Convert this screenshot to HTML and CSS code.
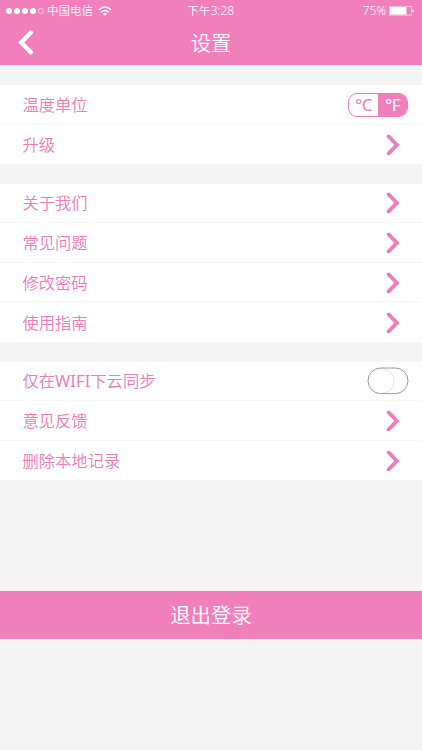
FILE: index.html
```html
<!DOCTYPE html>
<html lang="zh-CN">
<head>
<meta charset="utf-8">
<title>设置</title>
<link rel="stylesheet" href="styles.css">
</head>
<body>
<svg class="defs" width="0" height="0"><symbol id="chevron" viewBox="0 0 14 22"><path d="M2.6 2.4 11 10.9 2.6 19.4" fill="none" stroke="currentColor" stroke-width="3.7" stroke-linecap="round" stroke-linejoin="miter"/></symbol></svg>
<header class="header">
  <div class="status">
    <div class="carrier">
      <svg class="dots" width="38" height="8" viewBox="0 0 38 8"><g fill="#fff"><circle cx="3" cy="4" r="3"/><circle cx="11" cy="4" r="3"/><circle cx="19" cy="4" r="3"/><circle cx="27" cy="4" r="3"/></g><circle cx="34.9" cy="4" r="2.6" fill="none" stroke="#fbd3e8" stroke-width=".8"/></svg>
      <span>中国电信</span>
      <svg class="wifi" width="14" height="10" viewBox="0 0 14 10"><g fill="none" stroke="#fff" stroke-width="1.4"><path d="M.8 3.8Q7-1.8 13.2 3.8"/><path d="M3 6.2Q7 2.6 11 6.2"/></g><path d="M4.9 7.7Q7 6 9.1 7.7L7 9.8Z" fill="#fff"/></svg>
    </div>
    <div class="clock">下午3:28</div>
    <div class="power"><span>75%</span><svg width="26" height="10" viewBox="0 0 26 10"><rect x=".5" y=".5" width="22" height="8.6" fill="none" stroke="#fbd3e8" stroke-width=".8"/><path d="M1 1h16.5v7.6H1z" fill="#fff"/><path d="M23.3 3q3 1.8 0 3.6z" fill="#fff"/></svg></div>
  </div>
  <div class="nav">
    <svg class="back" width="16" height="26" viewBox="0 0 16 26"><path d="M12.8 2.5 3.2 12.5 12.8 22.3" fill="none" stroke="#fff" stroke-width="4.4" stroke-linecap="round"/></svg>
    <h1>设置</h1>
  </div>
</header>
<main>
  <section class="group">
    <div class="row"><span>温度单位</span><div class="units"><span class="unit">°C</span><span class="unit active">°F</span></div></div>
    <div class="row"><span>升级</span><svg class="arrow"><use href="#chevron"/></svg></div>
  </section>
  <section class="group">
    <div class="row"><span>关于我们</span><svg class="arrow"><use href="#chevron"/></svg></div>
    <div class="row"><span>常见问题</span><svg class="arrow"><use href="#chevron"/></svg></div>
    <div class="row"><span>修改密码</span><svg class="arrow"><use href="#chevron"/></svg></div>
    <div class="row"><span>使用指南</span><svg class="arrow"><use href="#chevron"/></svg></div>
  </section>
  <section class="group">
    <div class="row"><span>仅在<span class="latin">WIFI</span>下云同步</span><svg class="toggle" width="42" height="28" viewBox="0 0 42 28"><path d="M14 1.4Q27 3 27 14T14 26.6" fill="none" stroke="#ddd" stroke-width=".8"/><rect x="1" y="1" width="40" height="25.6" rx="12.8" fill="none" stroke="#999" stroke-width="1"/></svg></div>
    <div class="row"><span>意见反馈</span><svg class="arrow"><use href="#chevron"/></svg></div>
    <div class="row"><span>删除本地记录</span><svg class="arrow"><use href="#chevron"/></svg></div>
  </section>
  <button class="logout">退出登录</button>
</main>
</body>
</html>
```
FILE: styles.css
```css
* { box-sizing: border-box; }
body {
  margin: 0;
  min-height: 750px;
  background: #f5f5f5;
  color: #ed7cb8;
  font-family: "Noto Sans", "Noto Sans CJK SC", sans-serif;
  font-weight: 350;
}
svg { display: block; flex: none; }
.defs { position: absolute; }
.header { height: 65px; background: #f07fbc; color: #fff; }
.status {
  display: grid;
  grid-template-columns: 1fr auto 1fr;
  align-items: center;
  height: 21px;
  padding: 0 7px 0 6px;
  font-size: 11.5px;
  line-height: 21px;
}
.clock { font-size: 11.9px; }
.carrier, .power { display: flex; align-items: center; }
.carrier span { margin: 0 5px 0 3px; }
.power { justify-content: flex-end; gap: 3px; font-size: 12px; }
.nav {
  display: grid;
  grid-template-columns: 1fr auto 1fr;
  align-items: center;
  height: 44px;
  padding: 0 18px;
}
h1 { margin: 0; font-size: 20.3px; line-height: 44px; font-weight: 350; }
main { padding-top: 20px; }
.group { margin-bottom: 19.5px; background: #fff; }
.row {
  display: flex;
  align-items: center;
  justify-content: space-between;
  height: 39.6px;
  padding: 1px 13px 0 22.5px;
  border-bottom: 1px solid #f7f7f7;
  font-size: 16.3px;
  line-height: 24px;
}
.row:last-child { border-bottom: 0; }
.latin { font-weight: 400; letter-spacing: .15px; }
.arrow { width: 14px; height: 22px; margin-right: 9px; }
.units {
  display: flex;
  width: 60px;
  height: 24px;
  margin-right: 1px;
  border: 1px solid #ed7cb8;
  border-radius: 9px;
}
.unit { flex: 1; text-align: center; font-size: 17px; line-height: 22px; letter-spacing: -.5px; font-weight: 400; }
.active { background: #f07fbc; color: #fff; border-radius: 0 8px 8px 0; }
.logout {
  display: block;
  width: 100%;
  height: 48px;
  margin-top: 110.8px;
  padding: 1px 0 0;
  border: 0;
  background: #f07fbc;
  color: #fff;
  font: inherit;
  font-size: 20.4px;
  line-height: 47px;
}
```
